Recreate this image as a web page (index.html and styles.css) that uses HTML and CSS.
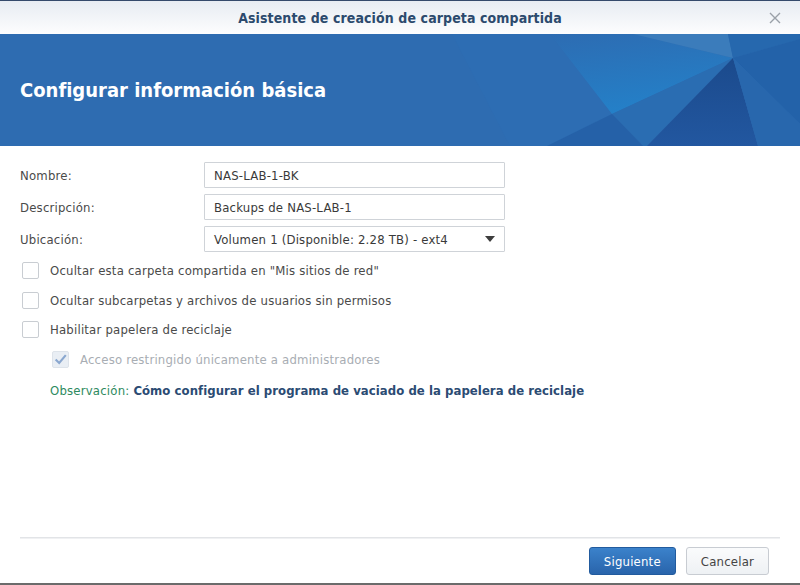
FILE: index.html
```html
<!DOCTYPE html>
<html lang="es">
<head>
<meta charset="utf-8">
<title>Asistente de creación de carpeta compartida</title>
<link rel="stylesheet" href="styles.css">
</head>
<body>
<div class="window">
  <div class="titlebar">
    <span class="title">Asistente de creación de carpeta compartida</span>
    <span class="close" aria-label="Cerrar">
      <svg width="12" height="12" viewBox="0 0 12 12"><path d="M1 1 L11 11 M11 1 L1 11" stroke="#9aa0a8" stroke-width="1.4" fill="none"/></svg>
    </span>
  </div>
  <div class="banner">
    <svg class="banner-art" width="800" height="112" viewBox="0 0 800 112">
      <defs>
        <linearGradient id="gBright" x1="0" y1="0" x2="0.3" y2="1">
          <stop offset="0" stop-color="#2d6cb2"/>
          <stop offset="1" stop-color="#2480c8"/>
        </linearGradient>
        <linearGradient id="gDark" x1="0" y1="0" x2="0" y2="1">
          <stop offset="0" stop-color="#1b4a8c"/>
          <stop offset="1" stop-color="#2257a0"/>
        </linearGradient>
      </defs>
      <polygon points="452,0 550,0 612,80 547,112 510,112" fill="#2d6db3"/>
      <polygon points="550,0 633,0 733,24 612,80" fill="url(#gBright)"/>
      <polygon points="633,0 728,0 733,24" fill="#3b7cbb"/>
      <polygon points="728,0 800,0 800,5 733,24" fill="#2668ae"/>
      <polygon points="612,80 733,24 647,112 643,112" fill="#2a6db2"/>
      <polygon points="612,80 643,112 547,112" fill="#2561a8"/>
      <polygon points="733,24 758,112 647,112" fill="url(#gDark)"/>
      <polygon points="733,24 800,5 800,90" fill="#2362a9"/>
      <polygon points="733,24 800,90 800,112 758,112" fill="#2867ad"/>
    </svg>
    <h1 class="banner-title">Configurar información básica</h1>
  </div>
  <div class="content">
    <div class="form">
      <label class="label" for="nombre">Nombre:</label>
      <div class="field"><input id="nombre" class="input" type="text" value="NAS-LAB-1-BK"></div>
      <label class="label" for="desc">Descripción:</label>
      <div class="field"><input id="desc" class="input" type="text" value="Backups de NAS-LAB-1"></div>
      <span class="label">Ubicación:</span>
      <div class="field">
        <div class="select">
          <span>Volumen 1 (Disponible: 2.28 TB) - ext4</span>
          <span class="arrow"></span>
        </div>
      </div>
    </div>
    <div class="checks">
      <div class="check-row"><span class="box"></span><span>Ocultar esta carpeta compartida en "Mis sitios de red"</span></div>
      <div class="check-row"><span class="box"></span><span>Ocultar subcarpetas y archivos de usuarios sin permisos</span></div>
      <div class="check-row"><span class="box"></span><span>Habilitar papelera de reciclaje</span></div>
      <div class="check-row sub disabled">
        <span class="box checked">
          <svg width="17" height="17" viewBox="0 0 17 17"><path d="M3 8.5 L7 12.5 L14.5 3.5" stroke="#8aa7cf" stroke-width="2.4" fill="none"/></svg>
        </span>
        <span>Acceso restringido únicamente a administradores</span>
      </div>
      <div class="note"><span class="note-label">Observación:</span> <a class="note-link" href="#">Cómo configurar el programa de vaciado de la papelera de reciclaje</a></div>
    </div>
  </div>
  <div class="footer">
    <button class="btn primary">Siguiente</button>
    <button class="btn">Cancelar</button>
  </div>
  <div class="bottom-edge"></div>
</div>
</body>
</html>
```
FILE: styles.css
```css
* { box-sizing: border-box; }
html, body { margin: 0; padding: 0; background: #fff; }
body {
  font-family: "DejaVu Sans Condensed", "DejaVu Sans", sans-serif;
  font-stretch: condensed;
  font-size: 13px;
  letter-spacing: 0.2px;
  color: #444;
}
.window {
  width: 800px;
  height: 585px;
  display: flex;
  flex-direction: column;
  border-top: 1px solid #34496b;
  overflow: hidden;
}
.titlebar {
  height: 33px;
  flex: none;
  display: flex;
  align-items: center;
  justify-content: center;
  position: relative;
  background: linear-gradient(#e7ecf2, #fdfdfe);
}
.title {
  font-size: 14px;
  font-weight: bold;
  color: #2c4a6d;
  letter-spacing: 0.1px;
}
.close {
  position: absolute;
  right: 19px;
  top: 11px;
  width: 12px;
  height: 12px;
  display: flex;
}
.banner {
  height: 112px;
  flex: none;
  background: #2e6cb1;
  position: relative;
  display: flex;
  align-items: center;
  overflow: hidden;
}
.banner-art { position: absolute; left: 0; top: 0; }
.banner-title {
  position: relative;
  margin: 0 0 0 20px;
  font-size: 20px;
  font-weight: bold;
  letter-spacing: 0;
  color: #fff;
}
.content {
  flex: 1;
  padding: 16px 0 0 20px;
}
.form {
  display: grid;
  grid-template-columns: 184px 301px;
  row-gap: 6px;
  align-items: center;
}
.label { color: #4a4a4a; }
.input, .select {
  width: 301px;
  height: 26px;
  border: 1px solid #cfd3d8;
  border-radius: 1px;
  padding: 0 9px;
  font: inherit;
  font-stretch: condensed;
  letter-spacing: 0.2px;
  color: #3a3a3a;
  background: #fff;
  outline: none;
}
.select {
  display: flex;
  align-items: center;
  justify-content: space-between;
}
.arrow {
  width: 0;
  height: 0;
  border-left: 5px solid transparent;
  border-right: 5px solid transparent;
  border-top: 6px solid #3d3d3d;
}
.checks {
  padding-top: 4px;
  display: flex;
  flex-direction: column;
}
.check-row {
  height: 29.5px;
  display: flex;
  align-items: center;
  gap: 11px;
  padding-left: 2px;
  color: #4a4a4a;
}
.box {
  width: 17px;
  height: 17px;
  border: 1px solid #c9cdd2;
  border-radius: 2px;
  background: #fff;
  flex: none;
  display: flex;
  align-items: center;
  justify-content: center;
}
.sub { padding-left: 32px; }
.disabled { color: #a8adb3; }
.box.checked {
  background: #e9eef4;
  border-color: #dde3ea;
}
.box.checked svg { display: block; }
.note {
  padding-left: 30px;
  margin-top: 2px;
  height: 29px;
  display: flex;
  align-items: center;
  gap: 4px;
}
.note-label { color: #2e8a60; }
.note-link {
  color: #2b4b73;
  font-weight: bold;
  letter-spacing: 0.05px;
  text-decoration: none;
}
.footer {
  flex: none;
  margin: 0 20px;
  border-top: 1px solid #e2e4e7;
  box-shadow: inset 0 1px 0 #f0f1f3;
  padding: 9px 11px 8px 0;
  display: flex;
  justify-content: flex-end;
  gap: 10px;
}
.btn {
  height: 28px;
  min-width: 82px;
  padding: 0 14px;
  border: 1px solid #c8ccd2;
  border-radius: 3px;
  background: linear-gradient(#fafbfc, #eef1f4);
  font: inherit;
  font-size: 13px;
  font-stretch: condensed;
  letter-spacing: 0.2px;
  color: #444;
}
.btn.primary {
  min-width: 87px;
  background: linear-gradient(#3b82cb, #2964ab);
  border-color: #225b9e;
  color: #fff;
}
.bottom-edge {
  flex: none;
  height: 2px;
  background: #6b6b6b;
}
```
